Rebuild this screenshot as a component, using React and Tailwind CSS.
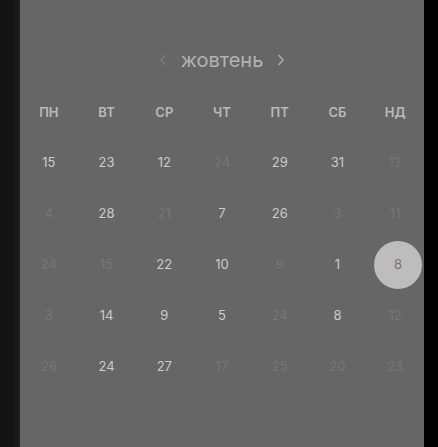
import React from "react";

const rows = [
  [["15", 1], ["23", 1], ["12", 1], ["24", 0], ["29", 1], ["31", 1], ["12", 0]],
  [["4", 0], ["28", 1], ["21", 0], ["7", 1], ["26", 1], ["3", 0], ["11", 0]],
  [["24", 0], ["15", 0], ["22", 1], ["10", 1], ["9", 0], ["1", 1], ["8", 2]],
  [["3", 0], ["14", 1], ["9", 1], ["5", 1], ["24", 0], ["8", 1], ["12", 0]],
  [["26", 0], ["24", 1], ["27", 1], ["17", 0], ["25", 0], ["20", 0], ["23", 0]],
];

const days = ["ПН", "ВТ", "СР", "ЧТ", "ПТ", "СБ", "НД"];

export default function App() {
  return (
    <div
      className="flex h-[447px] w-[438px] overflow-hidden"
      style={{ fontFamily: "Inter, 'Noto Sans', sans-serif" }}
    >
      <div className="w-[14px] bg-[#141414]" />
      <div className="w-[6px] bg-gradient-to-r from-[#161616] to-[#202020]" />
      <div className="flex w-[404px] flex-col bg-[#666666] pt-[40px]">
        <div className="flex h-[40px] items-center justify-center gap-[13px]">
          <svg width="10" height="14" viewBox="0 0 10 14">
            <path d="M7 2.5 L3 7 L7 11.5" fill="none" stroke="#7c7c7c" strokeWidth="1.6" strokeLinecap="round" strokeLinejoin="round" />
          </svg>
          <span className="text-[20px] leading-none text-[#b3b3b3]">жовтень</span>
          <svg width="10" height="14" viewBox="0 0 10 14">
            <path d="M3 2.5 L7 7 L3 11.5" fill="none" stroke="#a8a8a8" strokeWidth="1.6" strokeLinecap="round" strokeLinejoin="round" />
          </svg>
        </div>
        <div className="mt-[21px] grid h-[24px] grid-cols-7 items-center">
          {days.map((d) => (
            <div key={d} className="text-center text-[13px] font-semibold text-[#bababa]">
              {d}
            </div>
          ))}
        </div>
        <div className="mt-[12px] grid grid-cols-7">
          {rows.flat().map(([n, t], i) => (
            <div key={i} className="flex h-[51px] items-center justify-center">
              {t === 2 ? (
                <div className="ml-[6px] flex h-[48px] w-[48px] items-center justify-center rounded-full bg-[#bdbdbd] text-[13px] text-[#757575]">
                  {n}
                </div>
              ) : (
                <span className={"text-[13px] " + (t === 1 ? "text-[#cbcbcb]" : "text-[#767676]")}>{n}</span>
              )}
            </div>
          ))}
        </div>
      </div>
      <div className="w-[14px] bg-black" />
    </div>
  );
}
